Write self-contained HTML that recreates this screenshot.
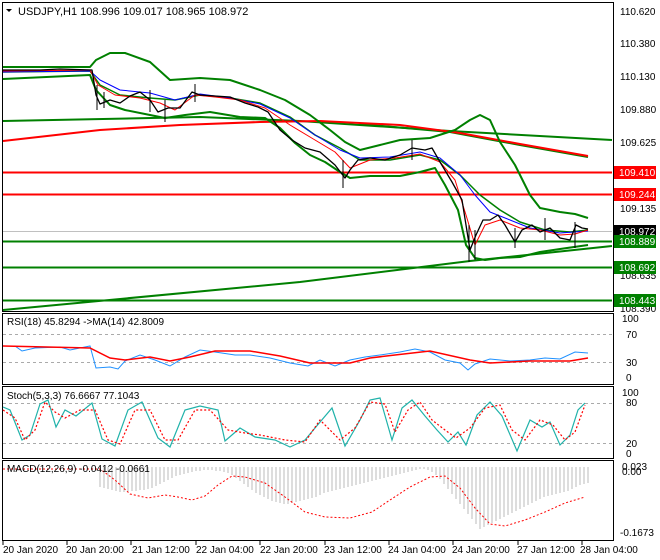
<!DOCTYPE html>
<html><head><style>
body{margin:0;background:#fff;}
svg{display:block;font-family:"Liberation Sans",sans-serif;}
</style></head><body>
<svg width="660" height="560" viewBox="0 0 660 560" xmlns="http://www.w3.org/2000/svg">
<rect width="660" height="560" fill="#fff"/>
<g fill="none" stroke="#000" stroke-width="1">
<rect x="2.5" y="2.5" width="611" height="309"/>
<rect x="2.5" y="313.5" width="611" height="71"/>
<rect x="2.5" y="386.5" width="611" height="72"/>
<rect x="2.5" y="460.5" width="611" height="80"/>
</g>
<g fill="none" stroke-linejoin="round">
<polyline stroke="#008000" stroke-width="2" points="3,121 200,117 300,121 450,131 612,140"/>
<polyline stroke="#008000" stroke-width="2" points="3,310 300,282 470,261 612,246"/>
<polyline stroke="#008000" stroke-width="2" points="360,124 450,132 520,145 588,157"/>
<polyline stroke="#ff0000" stroke-width="2" points="3,141 100,130 180,125 260,122 320,121 400,125 460,133 520,144 588,156"/>
<line x1="3" x2="612" y1="172.5" y2="172.5" stroke="#ff0000" stroke-width="2"/>
<line x1="3" x2="612" y1="194.5" y2="194.5" stroke="#ff0000" stroke-width="2"/>
<line x1="3" x2="612" y1="241.5" y2="241.5" stroke="#008000" stroke-width="2"/>
<line x1="3" x2="612" y1="267.5" y2="267.5" stroke="#008000" stroke-width="2"/>
<line x1="3" x2="612" y1="300.5" y2="300.5" stroke="#008000" stroke-width="2"/>
<line x1="3" x2="612" y1="231.5" y2="231.5" stroke="#c0c0c0" stroke-width="1"/>
<polyline stroke="#008000" stroke-width="2" points="3,67 90,67 96,60 110,53 125,53 150,62 170,80 200,78 230,80 260,90 285,100 310,115 330,130 345,142 360,150 380,145 400,140 430,138 455,130 470,120 480,115 490,120 500,142 515,165 530,195 540,208 560,212 575,214 588,218"/>
<polyline stroke="#008000" stroke-width="2" points="3,79 90,75 96,90 110,105 125,110 150,115 165,118 185,115 210,112 240,117 265,118 280,128 295,143 310,155 325,162 340,172 350,178 370,176 400,176 420,172 435,168 445,185 458,210 466,245 475,258 485,260 500,258 520,257 540,252 560,249 588,245"/>
<polyline stroke="#008000" stroke-width="1.5" points="3,72 90,71 100,85 120,95 150,98 175,100 200,95 230,98 260,103 290,117 315,135 340,148 360,160 390,160 420,155 440,160 460,175 480,195 500,210 520,222 545,230 570,232 588,230"/>
<polyline stroke="#0000ff" stroke-width="1" points="3,72 90,71 100,80 120,90 150,93 175,100 200,94 230,98 260,104 290,118 315,135 340,150 360,158 390,157 420,152 440,158 460,175 475,195 490,212 510,220 530,228 560,233 588,231"/>
<polyline stroke="#ff0000" stroke-width="1" points="3,71 90,70 98,85 115,95 140,98 160,103 175,110 195,95 215,97 240,100 265,108 290,125 315,140 335,152 350,168 370,160 395,158 420,154 440,162 455,180 466,215 475,245 485,225 500,220 520,228 540,230 560,235 575,234 588,230"/>
<polyline stroke="#000" stroke-width="1.3" points="3,70 40,70 60,69 92,70 96,95 100,104 110,100 120,103 130,96 140,92 150,100 158,112 168,108 180,108 192,92 200,95 215,96 230,97 245,103 258,107 268,112 280,130 292,140 305,148 320,152 335,165 345,178 350,170 358,160 370,158 385,160 400,155 412,148 425,150 432,148 440,162 452,182 462,200 470,250 476,235 483,220 490,220 498,215 505,225 515,242 522,230 532,225 540,232 550,228 560,238 570,240 576,225 582,228 588,229"/>
</g>
<g stroke="#000" stroke-width="1">
<line x1="97" y1="85" x2="97" y2="110"/><line x1="104" y1="92" x2="104" y2="108"/><line x1="150" y1="90" x2="150" y2="112"/><line x1="165" y1="100" x2="165" y2="122"/><line x1="195" y1="84" x2="195" y2="102"/>
<line x1="343" y1="160" x2="343" y2="188"/><line x1="412" y1="140" x2="412" y2="160"/><line x1="469" y1="225" x2="469" y2="262"/><line x1="475" y1="230" x2="475" y2="260"/><line x1="515" y1="228" x2="515" y2="248"/><line x1="545" y1="218" x2="545" y2="240"/><line x1="575" y1="222" x2="575" y2="248"/>
</g>
<polygon points="6,9 12,9 9,12" fill="#000"/>
<text x="18" y="15" font-size="11" fill="#000">USDJPY,H1  108.996 109.017 108.965 108.972</text>
<g font-size="10" fill="#000">
<text x="620" y="15">110.620</text><text x="620" y="47">110.380</text><text x="620" y="80">110.130</text><text x="620" y="113">109.880</text><text x="620" y="146">109.625</text><text x="620" y="212">109.135</text><text x="620" y="279">108.635</text><text x="620" y="312">108.390</text>
</g>
<g font-size="10">
<rect x="614" y="166" width="42" height="13" fill="#ff0000"/><text x="619" y="176" fill="#fff">109.410</text>
<rect x="614" y="188" width="42" height="13" fill="#ff0000"/><text x="619" y="198" fill="#fff">109.244</text>
<rect x="614" y="225" width="42" height="13" fill="#000"/><text x="619" y="235" fill="#fff">108.972</text>
<rect x="614" y="235" width="42" height="13" fill="#008000"/><text x="619" y="245" fill="#fff">108.889</text>
<rect x="614" y="261" width="42" height="13" fill="#008000"/><text x="619" y="271" fill="#fff">108.692</text>
<rect x="614" y="294" width="42" height="13" fill="#008000"/><text x="619" y="304" fill="#fff">108.443</text>
</g>
<g fill="none">
<line x1="3" x2="612" y1="334.5" y2="334.5" stroke="#aaa" stroke-dasharray="3,3"/>
<line x1="3" x2="612" y1="362.5" y2="362.5" stroke="#aaa" stroke-dasharray="3,3"/>
<polyline stroke="#1e90ff" stroke-width="1" points="3,346 15,346 22,351 35,348 60,347 70,350 90,346 96,368 110,367 118,369 125,361 140,355 155,360 170,366 185,357 200,350 215,352 235,355 250,355 270,358 290,363 308,366 320,360 335,366 350,360 365,357 380,355 400,352 415,349 430,352 445,360 460,363 468,370 475,364 490,359 510,361 530,360 545,358 560,359 575,352 588,353"/>
<polyline stroke="#ff0000" stroke-width="1.5" points="3,346 90,348 110,358 125,360 150,357 170,361 190,357 215,351 250,351 280,356 310,363 350,363 370,358 395,355 430,351 470,360 490,363 530,361 570,361 588,358"/>
</g>
<text x="7" y="325" font-size="10">RSI(18) 45.8294  -&gt;MA(14) 42.8009</text>
<g font-size="10"><text x="622" y="322">100</text><text x="626" y="338">70</text><text x="626" y="366">30</text><text x="626" y="381">0</text></g>
<g fill="none">
<line x1="3" x2="612" y1="403.5" y2="403.5" stroke="#aaa" stroke-dasharray="3,3"/>
<line x1="3" x2="612" y1="443.5" y2="443.5" stroke="#aaa" stroke-dasharray="3,3"/>
<polyline stroke="#20b2aa" stroke-width="1.2" points="3,407 10,410 22,440 30,435 40,404 48,400 56,427 65,410 76,416 92,403 102,439 115,446 128,410 142,402 158,438 170,447 185,410 200,406 218,410 225,441 240,428 255,437 275,440 290,447 305,440 315,428 332,408 345,446 360,420 370,400 380,398 392,440 402,408 412,400 425,416 437,430 448,442 458,432 466,445 477,415 490,402 502,416 517,451 530,420 542,427 550,422 560,445 570,435 578,410 585,403"/>
<polyline stroke="#ff0000" stroke-width="1.2" stroke-dasharray="2,2" points="3,410 15,418 25,440 35,430 45,402 55,412 65,418 80,410 95,410 108,440 120,444 135,410 150,410 165,440 178,440 195,410 210,410 228,430 245,433 260,435 285,440 305,442 320,420 340,440 355,428 370,402 385,404 395,432 408,410 420,402 432,420 445,430 456,438 470,428 485,408 500,405 512,430 525,440 540,420 553,425 565,440 575,432 585,405"/>
</g>
<text x="7" y="399" font-size="10">Stoch(5,3,3) 76.6667 77.1043</text>
<g font-size="10"><text x="622" y="396">100</text><text x="626" y="406">80</text><text x="626" y="447">20</text><text x="626" y="457">0</text></g>
<g stroke="#bbb" stroke-width="1">
<path d="M100,467v20M104,467v21M108,467v22M112,467v23M116,467v24M120,467v25M124,467v25M128,467v25M132,467v24M136,467v24M140,467v23M144,467v23M148,467v22M152,467v21M156,467v19M160,467v17M164,467v15M168,467v13M172,467v11M176,467v9M180,467v8M184,467v7M188,467v6M192,467v5M196,467v4M200,467v4M204,467v3M208,467v3M212,467v3M216,467v4M220,467v4M224,467v5M228,467v6M232,467v8M236,467v11M240,467v14M244,467v17M248,467v20M252,467v23M256,467v26M260,467v28M264,467v30M268,467v32M272,467v34M276,467v35M280,467v36M284,467v37M288,467v37M292,467v36M296,467v35M300,467v34M304,467v33M308,467v32M312,467v31M316,467v30M320,467v28M324,467v26M328,467v25M332,467v24M336,467v23M340,467v22M344,467v21M348,467v20M352,467v19M356,467v18M360,467v17M364,467v16M368,467v15M372,467v14M376,467v13M380,467v12M384,467v11M388,467v10M392,467v9M396,467v8M400,467v7M404,467v6M408,467v5M412,467v4M416,467v3M420,467v2M424,467v2M428,467v3M432,467v5M436,467v8M440,467v12M444,467v17M448,467v22M452,467v27M456,467v32M460,467v37M464,467v42M468,467v47M472,467v52M476,467v57M480,467v62M484,467v60M488,467v58M492,467v56M496,467v54M500,467v52M504,467v50M508,467v48M512,467v46M516,467v44M520,467v42M524,467v40M528,467v38M532,467v36M536,467v34M540,467v32M544,467v30M548,467v29M552,467v28M556,467v27M560,467v26M564,467v25M568,467v24M572,467v22M576,467v20M580,467v18M584,467v17M588,467v16"/>
</g>
<polyline fill="none" stroke="#ff0000" stroke-width="1" stroke-dasharray="2,2" points="3,469 100,469 115,480 130,494 148,498 165,495 178,497 192,500 205,496 218,485 232,476 245,477 265,483 285,497 305,512 325,517 350,518 372,512 390,500 410,487 430,477 445,476 460,488 475,508 490,524 505,526 525,520 545,512 565,503 585,497"/>
<text x="7" y="472" font-size="10">MACD(12,26,9) -0.0412 -0.0661</text>
<g font-size="10"><text x="622" y="470">0.023</text><text x="622" y="475">0.00</text><text x="620" y="536">-0.1673</text></g>
<g stroke="#000"><path d="M3,541v4M67,541v4M131,541v4M196,541v4M260,541v4M325,541v4M389,541v4M453,541v4M518,541v4M582,541v4"/></g>
<g font-size="10"><text x="3" y="553">20 Jan 2020</text><text x="66" y="553">20 Jan 20:00</text><text x="132" y="553">21 Jan 12:00</text><text x="196" y="553">22 Jan 04:00</text><text x="260" y="553">22 Jan 20:00</text><text x="324" y="553">23 Jan 12:00</text><text x="388" y="553">24 Jan 04:00</text><text x="452" y="553">24 Jan 20:00</text><text x="517" y="553">27 Jan 12:00</text><text x="580" y="553">28 Jan 04:00</text></g>
</svg>
</body></html>
